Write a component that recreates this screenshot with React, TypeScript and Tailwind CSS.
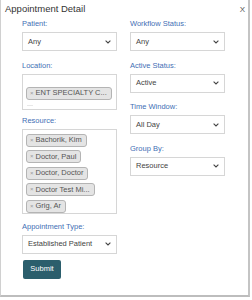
import React from "react";

const Chevron = () => (
  <svg width="6" height="4" viewBox="0 0 6 4" className="shrink-0">
    <path d="M0.6 0.7 L3 3 L5.4 0.7" fill="none" stroke="#444" strokeWidth="1.1" />
  </svg>
);

const Label = ({ children }: { children: React.ReactNode }) => (
  <div className="h-[10px] text-[7.5px] leading-[10px] text-[#3f6fb5] mb-[3px]">{children}</div>
);

const Select = ({ value }: { value: string }) => (
  <div className="h-[19px] border border-[#d6d6d6] bg-white flex items-center justify-between pl-[5px] pr-[5px] text-[7.5px] text-[#444]">
    <span>{value}</span>
    <Chevron />
  </div>
);

const Chip = ({ text }: { text: string }) => (
  <div className="inline-flex items-center h-[13px] bg-[#e4e4e4] border border-[#b4b4b4] rounded-[3px] pl-[3px] pr-[4px] text-[7.5px] text-[#555] whitespace-nowrap">
    <span className="text-[6px] text-[#999] mr-[2px]">×</span>
    {text}
  </div>
);

const resources = ["Bachorik, Kim", "Doctor, Paul", "Doctor, Doctor", "Doctor Test Mi...", "Grig, Ar"];

export default function App() {
  return (
    <div className="w-[252px] h-[300px] bg-white font-['Liberation_Sans',Arial,sans-serif]">
      <div className="w-[250px] h-[297px] bg-white border-l border-[#d0d0d0] border-r-2 border-r-[#c4c4c4] border-b-2 border-b-[#bdbdbd]">
        <div className="flex items-start justify-between pt-[3px] pl-[4px] pr-[3px] h-[19px]">
          <span className="text-[9.5px] leading-[12px] text-[#333]">Appointment Detail</span>
          <span className="text-[8px] leading-[12px] text-[#555] mt-[1px]">X</span>
        </div>
        <div className="flex gap-[13px] pl-[21px]">
          <div className="w-[95px] flex flex-col">
            <Label>Patient:</Label>
            <Select value="Any" />
            <div className="h-[9.5px]" />
            <Label>Location:</Label>
            <div className="h-[36px] border border-[#d6d6d6] pt-[3px] pl-[3px]">
              <Chip text="ENT SPECIALTY C..." />
              <div className="w-[6px] h-px bg-[#e8e8e8] mt-[3px] ml-[1px]" />
            </div>
            <div className="h-[6px]" />
            <Label>Resource:</Label>
            <div className="h-[85px] border border-[#d6d6d6] pt-[4px] pl-[3px] flex flex-col items-start gap-[3.5px]">
              {resources.map((r) => (
                <Chip key={r} text={r} />
              ))}
            </div>
            <div className="h-[8px]" />
            <Label>Appointment Type:</Label>
            <Select value="Established Patient" />
            <div className="h-[6px]" />
            <button className="w-[38px] h-[19px] ml-px bg-[#2b5e6c] rounded-[2px] text-white text-[7.5px] flex items-center justify-center">
              Submit
            </button>
          </div>
          <div className="w-[95px] flex flex-col">
            <Label>Workflow Status:</Label>
            <Select value="Any" />
            <div className="h-[9.5px]" />
            <Label>Active Status:</Label>
            <Select value="Active" />
            <div className="h-[9.5px]" />
            <Label>Time Window:</Label>
            <Select value="All Day" />
            <div className="h-[9.5px]" />
            <Label>Group By:</Label>
            <Select value="Resource" />
          </div>
        </div>
      </div>
    </div>
  );
}
